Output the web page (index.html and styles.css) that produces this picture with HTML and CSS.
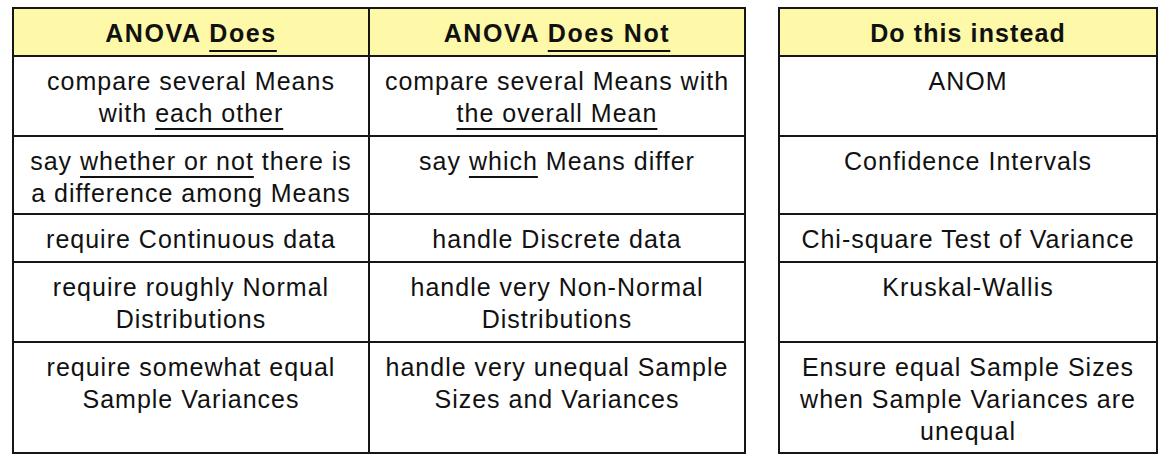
FILE: index.html
```html
<!DOCTYPE html>
<html lang="en">
<head>
<meta charset="utf-8">
<title>ANOVA Does / Does Not</title>
<link rel="stylesheet" href="styles.css">
</head>
<body>
<table class="grid">
  <colgroup>
    <col class="c1">
    <col class="c2">
    <col class="cgap">
    <col class="c3">
  </colgroup>
  <tr class="head">
    <th>ANOVA <span class="u">Does</span></th>
    <th>ANOVA <span class="u">Does Not</span></th>
    <td class="gap"></td>
    <th class="alt">Do this instead</th>
  </tr>
  <tr class="tall">
    <td>compare several Means<br>with <span class="u">each other</span></td>
    <td>compare several Means with<br><span class="u">the overall Mean</span></td>
    <td class="gap"></td>
    <td>ANOM</td>
  </tr>
  <tr class="mid">
    <td>say <span class="u">whether or not</span> there is<br>a difference among Means</td>
    <td>say <span class="u">which</span> Means differ</td>
    <td class="gap"></td>
    <td>Confidence Intervals</td>
  </tr>
  <tr class="short">
    <td>require Continuous data</td>
    <td>handle Discrete data</td>
    <td class="gap"></td>
    <td>Chi-square Test of Variance</td>
  </tr>
  <tr class="tall">
    <td>require roughly Normal<br>Distributions</td>
    <td>handle very Non-Normal<br>Distributions</td>
    <td class="gap"></td>
    <td>Kruskal-Wallis</td>
  </tr>
  <tr class="last">
    <td>require somewhat equal<br>Sample Variances</td>
    <td>handle very unequal Sample<br>Sizes and Variances</td>
    <td class="gap"></td>
    <td>Ensure equal Sample Sizes<br>when Sample Variances are<br>unequal</td>
  </tr>
</table>
</body>
</html>
```

FILE: styles.css
```css
html, body {
  margin: 0;
  padding: 0;
  background: #ffffff;
}

.grid {
  border-collapse: collapse;
  table-layout: fixed;
  width: 1145px;
  margin: 7px 0 0 12px;
  font-family: "Liberation Sans", Arial, sans-serif;
  font-size: 25px;
  line-height: 32px;
  letter-spacing: 1px;
  color: #111111;
}

.c1 { width: 356px; }
.c2 { width: 376px; }
.cgap { width: 34px; }
.c3 { width: 378px; }

.head { height: 48px; }
.tall { height: 80px; }
.mid { height: 78px; }
.short { height: 48px; }
.last { height: 111px; }

.grid th,
.grid td {
  border: 2px solid #161616;
  padding: 8px 0 4px;
  text-align: center;
  vertical-align: top;
  white-space: nowrap;
}

.grid th {
  background: #fdf9a8;
  font-weight: bold;
  letter-spacing: 1.6px;
}

.grid th.alt {
  letter-spacing: 1.1px;
}

.grid td.gap {
  border-top: none;
  border-bottom: none;
  background: #ffffff;
  padding: 0;
}

.u {
  text-decoration: underline;
  text-decoration-thickness: 2px;
  text-underline-offset: 6px;
}

.head .u {
  text-underline-offset: 8px;
}
```
